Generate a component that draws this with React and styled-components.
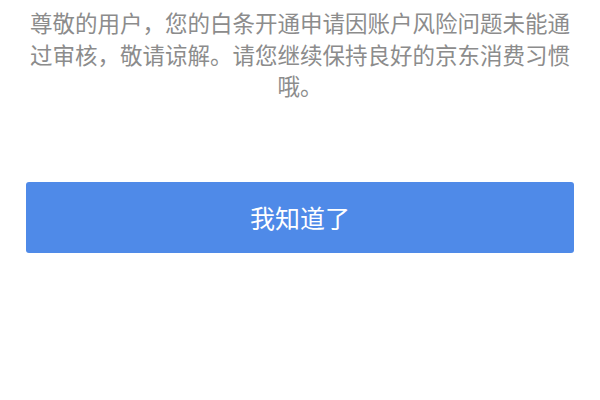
import React from 'react';
import styled, { createGlobalStyle } from 'styled-components';

const GlobalStyle = createGlobalStyle`
  html, body {
    margin: 0;
    padding: 0;
    background: #fff;
  }
  body {
    font-family: "Noto Sans CJK SC", "Noto Sans", sans-serif;
  }
`

const Page = styled.div`
  width: 600px;
  height: 400px;
  box-sizing: border-box;
  padding: 7px 26px 0;
  display: flex;
  flex-direction: column;
  background: #fff;
`

const Message = styled.p`
  margin: 0;
  font-size: 22.5px;
  line-height: 31.5px;
  color: #8c8c8c;
  text-align: center;
`

const Button = styled.button`
  margin-top: 80px;
  height: 71px;
  border: none;
  border-radius: 3px;
  background: #4f8ae8;
  color: #fff;
  font-family: inherit;
  font-size: 25px;
  cursor: pointer;
  display: flex;
  align-items: center;
  justify-content: center;
`

const App = () => {
  return (
    <Page>
      <GlobalStyle />
      <Message>
        尊敬的用户，您的白条开通申请因账户风险问题未能通过审核，敬请谅解。请您继续保持良好的京东消费习惯哦。
      </Message>
      <Button>我知道了</Button>
    </Page>
  )
}

export default App;
